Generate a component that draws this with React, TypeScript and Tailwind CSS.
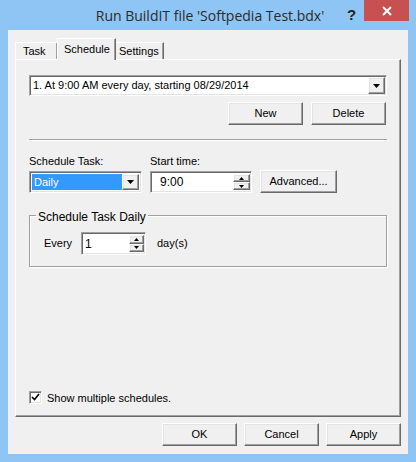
import { useState } from "react";

const raised =
  "border border-t-white border-l-white border-r-[#696969] border-b-[#696969] shadow-[inset_-1px_-1px_#a0a0a0,inset_1px_1px_#e3e3e3] bg-[#f0f0f0]";
const sunken =
  "border border-t-[#a0a0a0] border-l-[#a0a0a0] border-r-white border-b-white shadow-[inset_1px_1px_#696969,inset_-1px_-1px_#e3e3e3]";

function Arrow() {
  return (
    <svg width="7" height="4" viewBox="0 0 7 4">
      <path d="M0 0h7L3.5 4z" fill="#000" />
    </svg>
  );
}

function DropButton() {
  return (
    <div className={`flex h-full w-[17px] items-center justify-center ${raised}`}>
      <Arrow />
    </div>
  );
}

function Spin({ w = "w-[17px]" }: { w?: string }) {
  return (
    <div className={`flex h-full ${w} flex-col`}>
      <div className={`flex flex-1 items-center justify-center ${raised}`}>
        <svg width="5" height="3" viewBox="0 0 5 3">
          <path d="M0 3h5L2.5 0z" fill="#000" />
        </svg>
      </div>
      <div className={`flex flex-1 items-center justify-center ${raised}`}>
        <svg width="5" height="3" viewBox="0 0 5 3">
          <path d="M0 0h5L2.5 3z" fill="#000" />
        </svg>
      </div>
    </div>
  );
}

function Btn({ label, w = "w-[75px]" }: { label: string; w?: string }) {
  return (
    <button type="button" className={`flex h-[23px] ${w} items-center justify-center text-[11px] text-black ${raised}`}>
      {label}
    </button>
  );
}

export default function App() {
  const [showMultiple, setShowMultiple] = useState(true);

  return (
    <div
      className="flex h-[462px] w-[416px] flex-col bg-[#8fc5f4]"
      style={{ fontFamily: '"Liberation Sans", Arial, sans-serif' }}
    >
      {/* title bar */}
      <div className="relative flex h-[30px] items-center justify-center">
        <span
          className="pl-[4px] text-[14px] text-[#2b2b2b]"
          style={{ fontFamily: '"Open Sans", "Noto Sans", sans-serif' }}
        >
          Run BuildIT file 'Softpedia Test.bdx'
        </span>
        <span className="absolute left-[347px] top-[4px] text-[15px] font-bold text-[#222]">?</span>
        <div className="absolute left-[364px] top-0 flex h-[21px] w-[45px] items-center justify-center bg-[#c75050]">
          <svg width="10" height="10" viewBox="0 0 10 10">
            <path d="M1 1l8 8M9 1l-8 8" stroke="#fff" strokeWidth="2" />
          </svg>
        </div>
      </div>

      {/* client */}
      <div className="mx-[8px] flex h-[424px] flex-col bg-[#f0f0f0] px-[7px] pt-[8px] text-[11px] text-black">
        {/* tabs */}
        <div className="flex h-[21px] items-end">
          <div className="flex h-[17px] w-[42px] items-center border-t border-l border-t-white border-l-white pl-[7px] shadow-[inset_-1px_0_#a0a0a0]">
            Task
          </div>
          <div className="relative z-10 -mb-[1px] flex h-[22px] w-[59px] items-start border-t border-l border-r border-t-white border-l-white border-r-[#696969] bg-[#f0f0f0] pl-[6px] pt-[2px] shadow-[inset_-1px_0_#a0a0a0]">
            Schedule
          </div>
          <div className="flex h-[17px] w-[48px] items-center border-t border-r border-t-white border-r-[#696969] pl-[3px] shadow-[inset_-1px_0_#a0a0a0]">
            Settings
          </div>
        </div>

        {/* panel */}
        <div className="flex h-[358px] w-[386px] flex-col border border-t-white border-l-white border-r-[#696969] border-b-[#696969] px-[13px] pt-[15px] shadow-[inset_-1px_-1px_#a0a0a0]">
          <div className={`flex h-[21px] items-center bg-white pl-[3px] pr-[1px] py-[1px] ${sunken}`}>
            <span className="flex-1">1. At 9:00 AM every day, starting 08/29/2014</span>
            <DropButton />
          </div>

          <div className="mt-[6px] flex justify-end gap-[8px] pr-[1px]">
            <Btn label="New" />
            <Btn label="Delete" />
          </div>

          <div className="mt-[14px] h-[2px] border-t border-b border-t-[#a0a0a0] border-b-white" />

          <div className="mt-[14px] flex items-start gap-[8px]">
            <div className="flex flex-col">
              <span className="h-[16px] leading-[12px]">Schedule Task:</span>
              <div className={`flex h-[22px] w-[113px] items-center bg-white p-[2px] ${sunken}`}>
                <span className="flex h-full flex-1 items-center bg-[#3399ff] pl-[2px] text-white">Daily</span>
                <DropButton />
              </div>
            </div>
            <div className="flex flex-col">
              <span className="h-[16px] leading-[12px]">Start time:</span>
              <div className={`flex h-[22px] w-[102px] items-center bg-white py-[2px] pr-[1px] pl-[9px] ${sunken}`}>
                <span className="flex-1 text-[12px]">9:00</span>
                <Spin />
              </div>
            </div>
            <div className="mt-[15px]">
              <Btn label="Advanced..." w="w-[77px]" />
            </div>
          </div>

          {/* group box */}
          <div className="relative mt-[22px] h-[52px] border border-[#a0a0a0] shadow-[1px_1px_white,inset_1px_1px_white]">
            <span className="absolute -top-[8px] left-[6px] bg-[#f0f0f0] px-[2px] text-[12px]">Schedule Task Daily</span>
            <div className="flex items-center pl-[14px] pt-[16px]">
              <span className="w-[37px]">Every</span>
              <div className={`flex h-[23px] w-[65px] items-center bg-white py-[2px] pr-[1px] pl-[3px] ${sunken}`}>
                <span className="flex-1 text-[12px]">1</span>
                <Spin w="w-[15px]" />
              </div>
              <span className="ml-[11px]">day(s)</span>
            </div>
          </div>

          <div className="flex-1" />

          <label className="mb-[10px] flex items-center gap-[5px]">
            <span
              className={`flex h-[13px] w-[13px] items-center justify-center bg-white ${sunken}`}
              onClick={() => setShowMultiple(!showMultiple)}
            >
              {showMultiple && (
                <svg width="9" height="9" viewBox="0 0 9 9">
                  <path d="M1 4l2.5 2.5L8 1" stroke="#000" strokeWidth="1.6" fill="none" />
                </svg>
              )}
            </span>
            <span>Show multiple schedules.</span>
          </label>
        </div>

        {/* footer */}
        <div className="mt-[6px] flex justify-end gap-[7px]">
          <Btn label="OK" />
          <Btn label="Cancel" />
          <Btn label="Apply" />
        </div>
      </div>
    </div>
  );
}
